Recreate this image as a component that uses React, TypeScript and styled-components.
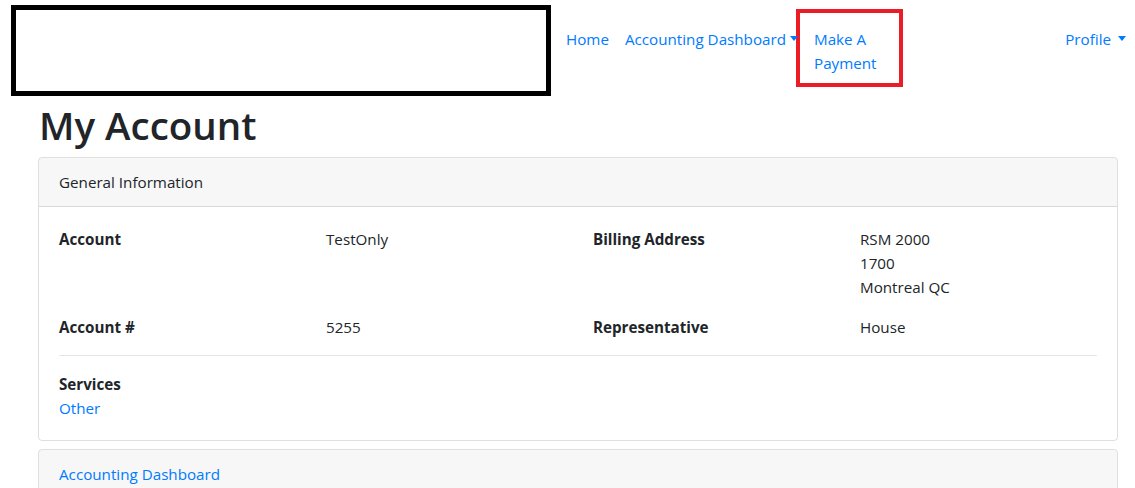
import React from 'react'
import styled, { createGlobalStyle } from 'styled-components'

const GlobalStyle = createGlobalStyle`
  * { box-sizing: border-box; }
  body {
    margin: 0;
    font-family: "Segoe UI", "Open Sans", sans-serif;
    font-size: 15.2px;
    line-height: 24px;
    color: #212529;
    background: #fff;
  }
`

const Navbar = styled.nav`
  display: flex;
  align-items: flex-start;
  padding: 5px 1px 0 11px;
`

const Brand = styled.div`
  width: 540px;
  height: 91px;
  border: 5px solid #000;
  flex-shrink: 0;
`

const NavList = styled.ul`
  display: flex;
  align-items: flex-start;
  list-style: none;
  margin: 0;
  padding: 0 0 0 7px;
  flex: 1;
`

const NavItem = styled.li<{ $push?: boolean; $boxed?: boolean }>`
  margin-left: ${(p) => (p.$push ? 'auto' : '0')};
  ${(p) =>
    p.$boxed
      ? `
    border: 4px solid #ed1c24;
    margin-top: 4px;
    margin-left: -10px;
    width: 107px;
    height: 78px;
    padding: 14px 10px 0 14px;
  `
      : `
    padding: 22px 8px 0 8px;
  `}
`

const NavLink = styled.a`
  color: #007bff;
  text-decoration: none;
  display: inline-flex;
  align-items: center;
`

const Caret = styled.span<{ $gap?: number }>`
  display: inline-block;
  margin-left: ${(p) => p.$gap ?? 4}px;
  width: 0;
  height: 0;
  border-top: 5px solid #007bff;
  border-left: 4px solid transparent;
  border-right: 4px solid transparent;
  transform: translateY(-1px);
`

const Main = styled.main`
  padding: 0 17px 0 38px;
`

const Title = styled.h1`
  margin: 5px 0 8px 1px;
  font-size: 38.5px;
  font-weight: 600;
  line-height: 48px;
`

const Card = styled.section`
  border: 1px solid rgba(0, 0, 0, 0.125);
  border-radius: 4px;
  margin-bottom: 8px;
  overflow: hidden;
`

const CardHeader = styled.div`
  padding: 12px 20px;
  background: rgba(0, 0, 0, 0.03);
  border-bottom: 1px solid rgba(0, 0, 0, 0.125);
`

const CardBody = styled.div`
  padding: 20px;
`

const Row = styled.div`
  display: grid;
  grid-template-columns: repeat(4, 1fr);
  margin: 0 -15px 16px;
`

const Cell = styled.div<{ $bold?: boolean }>`
  padding: 0 15px;
  font-weight: ${(p) => (p.$bold ? 700 : 400)};
`

const Divider = styled.hr`
  margin: 0 0 16px;
  border: 0;
  border-top: 1px solid rgba(0, 0, 0, 0.1);
`

const Label = styled.div`
  font-weight: 700;
`

const Link = styled.a`
  color: #007bff;
  text-decoration: none;
`

export default function App() {
  return (
    <>
      <GlobalStyle />
      <Navbar>
        <Brand />
        <NavList>
          <NavItem>
            <NavLink href="#">Home</NavLink>
          </NavItem>
          <NavItem>
            <NavLink href="#">
              Accounting Dashboard
              <Caret />
            </NavLink>
          </NavItem>
          <NavItem $boxed>
            <NavLink href="#">Make A Payment</NavLink>
          </NavItem>
          <NavItem $push>
            <NavLink href="#">
              Profile
              <Caret $gap={7} />
            </NavLink>
          </NavItem>
        </NavList>
      </Navbar>
      <Main>
        <Title>My Account</Title>
        <Card>
          <CardHeader>General Information</CardHeader>
          <CardBody>
            <Row>
              <Cell $bold>Account</Cell>
              <Cell>TestOnly</Cell>
              <Cell $bold>Billing Address</Cell>
              <Cell>
                RSM 2000
                <br />
                1700
                <br />
                Montreal QC
              </Cell>
            </Row>
            <Row>
              <Cell $bold>Account #</Cell>
              <Cell>5255</Cell>
              <Cell $bold>Representative</Cell>
              <Cell>House</Cell>
            </Row>
            <Divider />
            <Label>Services</Label>
            <Link href="#">Other</Link>
          </CardBody>
        </Card>
        <Card>
          <CardHeader>
            <Link href="#">Accounting Dashboard</Link>
          </CardHeader>
        </Card>
      </Main>
    </>
  )
}
